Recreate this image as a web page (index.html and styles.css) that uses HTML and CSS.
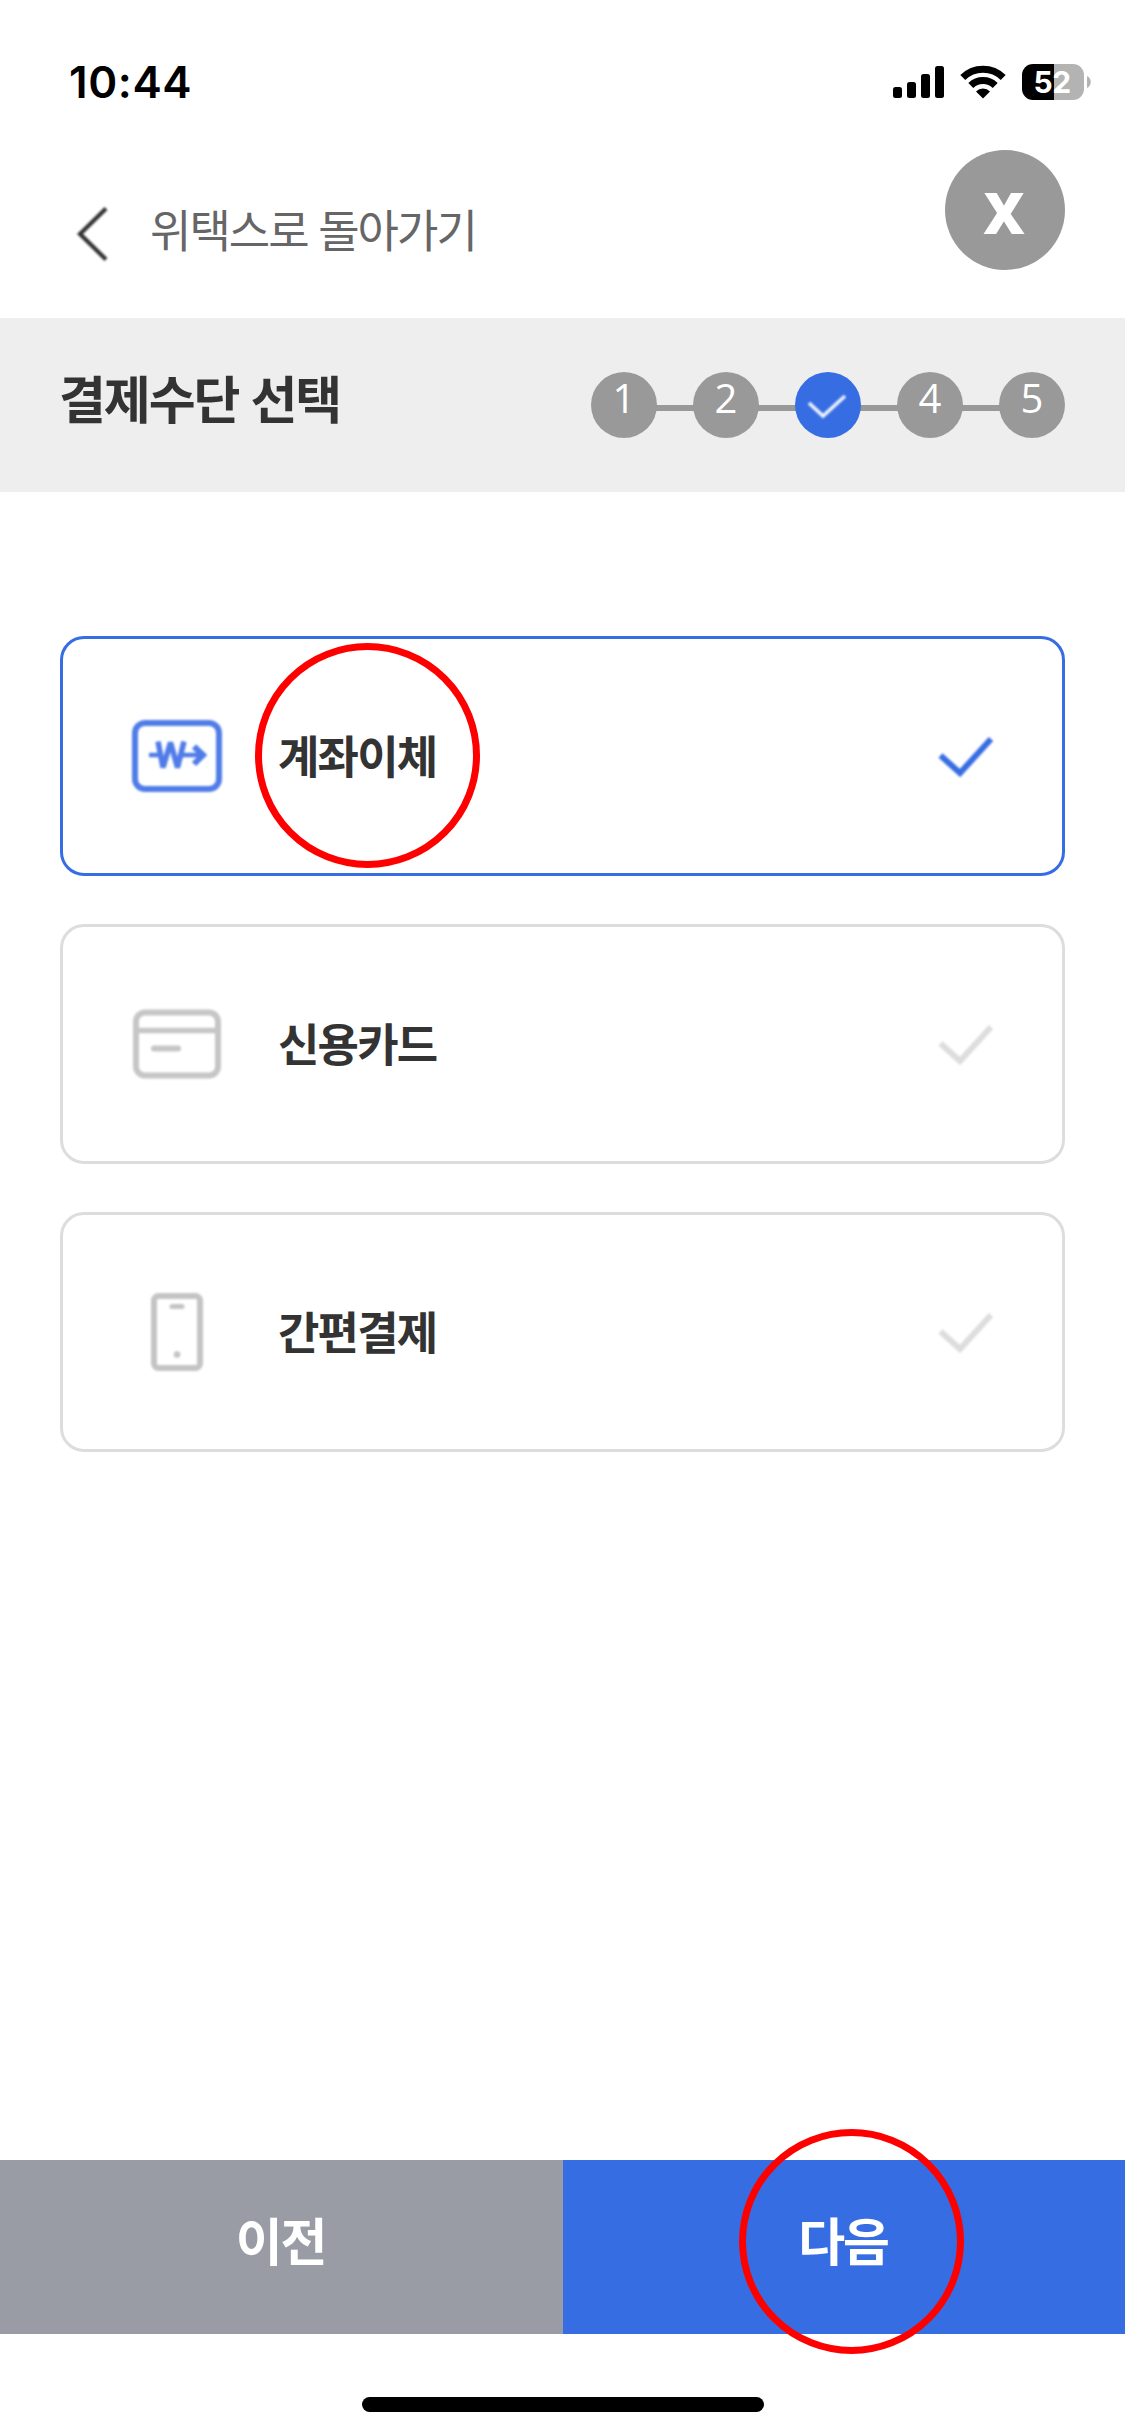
FILE: index.html
```html
<!DOCTYPE html>
<html lang="ko">
<head>
<meta charset="utf-8">
<title>결제수단 선택</title>
<link rel="stylesheet" href="styles.css">
</head>
<body>
<div class="screen">
  <div class="status">
    <span class="time">10:44</span>
    <svg class="signal" width="51" height="32" viewBox="0 0 51 32">
      <rect x="0" y="21" width="9" height="11" rx="2.5"/>
      <rect x="14" y="16" width="9" height="16" rx="2.5"/>
      <rect x="28" y="8" width="9" height="24" rx="2.5"/>
      <rect x="42" y="0" width="9" height="32" rx="2.5"/>
    </svg>
    <svg class="wifi" width="46" height="34" viewBox="0 0 46 34">
      <g fill="none" stroke="#000" stroke-width="7">
        <path d="M2.800 12.600a28.800 28.800 0 0 1 40.400 0"/>
        <path d="M10.800 20.600a17.400 17.400 0 0 1 24.400 0"/>
      </g>
      <path d="M16 26.400a9.700 9.700 0 0 1 14 0L23 33.500z"/>
    </svg>
    <div class="battery"><span class="level">52</span></div>
    <svg class="nub" width="4" height="12" viewBox="0 0 4 12"><path d="M0 0c5 2 5 10 0 12z" fill="#b3b3b3"/></svg>
  </div>

  <header class="topbar">
    <a class="back">
      <svg class="soft" width="34" height="60" viewBox="0 0 34 60"><path d="M31 4.500 5 30l26 25.500" fill="none" stroke="#333" stroke-width="4.200"/></svg>
      <span>위택스로 돌아가기</span>
    </a>
    <button class="close">X</button>
  </header>

  <section class="band">
    <h1 class="title">결제수단 선택</h1>
    <ol class="steps">
      <li class="step">1</li>
      <li class="step">2</li>
      <li class="step current"><svg class="soft" width="42" height="30" viewBox="0 0 42 30"><path d="M3 10 17 23 39 3" fill="none" stroke="#f0f4fe" stroke-width="3.600"/></svg></li>
      <li class="step">4</li>
      <li class="step">5</li>
    </ol>
  </section>

  <main class="options">
    <div class="option selected">
      <svg class="soft" width="96" height="96" viewBox="0 0 96 96" fill="none" stroke="#507ce8">
        <rect x="6" y="15" width="84" height="66" rx="10" stroke-width="6"/>
        <path d="M20 47H32M52 47H74" stroke-width="4.500"/>
        <path d="M29 33.500 34 59.500 41.500 34.500 48.500 59.500 55 33.500" stroke-width="5.500" stroke-linejoin="bevel"/>
        <path d="M65 38.500 74 47 65 56" stroke-width="6"/>
      </svg>
      <span class="label">계좌이체<i class="ring"></i></span>
      <svg class="check soft" width="60" height="48" viewBox="0 0 60 48"><path d="M4.500 23.500 24 41 55 7" fill="none" stroke="#376de3" stroke-width="6"/></svg>
    </div>
    <div class="option">
      <svg class="soft" width="96" height="96" viewBox="0 0 96 96" fill="none" stroke="#c6c6c6">
        <rect x="7" y="16.500" width="82" height="63" rx="9" stroke-width="6"/>
        <path d="M8 34.500H88" stroke-width="5.500"/>
        <path d="M25 52.500H49" stroke-width="6" stroke-linecap="round"/>
      </svg>
      <span class="label">신용카드</span>
      <svg class="check soft" width="60" height="48" viewBox="0 0 60 48"><path d="M4.500 23.500 24 41 55 7" fill="none" stroke="#ddd" stroke-width="6"/></svg>
    </div>
    <div class="option">
      <svg class="soft" width="96" height="96" viewBox="0 0 96 96" fill="none" stroke="#c4c4c4">
        <rect x="25" y="12" width="46" height="72" rx="4.500" stroke-width="6"/>
        <path d="M43 22.500H53" stroke-width="5" stroke-linecap="round"/>
        <path d="M48 70.500h.1" stroke-width="6.500" stroke-linecap="round"/>
      </svg>
      <span class="label">간편결제</span>
      <svg class="check soft" width="60" height="48" viewBox="0 0 60 48"><path d="M4.500 23.500 24 41 55 7" fill="none" stroke="#ddd" stroke-width="6"/></svg>
    </div>
  </main>

  <footer class="actions">
    <button class="action prev">이전</button>
    <button class="action next"><span class="target">다음<i class="ring"></i></span></button>
  </footer>
  <div class="home"></div>
</div>
</body>
</html>
```
FILE: styles.css
```css
* { box-sizing: border-box; }
body {
  margin: 0;
  background: #fff;
  color: #333;
  font-family: "Noto Sans CJK KR", sans-serif;
}
button { border: 0; padding: 0; font-family: inherit; color: #fff; }
svg { display: block; flex: none; }
.soft { filter: blur(0.8px); }
.screen {
  width: 1125px;
  height: 2436px;
  display: flex;
  flex-direction: column;
  overflow: hidden;
}

.status {
  height: 150px;
  padding: 64px 34px 0 69px;
  display: flex;
  align-items: flex-start;
  font-family: Inter, sans-serif;
  color: #000;
}
.time {
  font-size: 44px;
  font-weight: 600;
  line-height: 36px;
  letter-spacing: 0.6px;
  margin-right: auto;
}
.signal { margin: 2px 16px 0 0; }
.wifi { margin: 1px 16px 0 0; }
.battery {
  width: 62px;
  height: 36px;
  border-radius: 11px;
  background: linear-gradient(90deg, #000 32px, #b3b3b3 32px);
  text-align: center;
}
.level {
  display: block;
  color: #fff;
  font-size: 30px;
  font-weight: 700;
  line-height: 36px;
  letter-spacing: -0.5px;
  margin-left: -2px;
}
.nub { margin: 12px 0 0 3px; }

.topbar {
  height: 168px;
  padding: 0 60px 0 75px;
  display: flex;
  justify-content: space-between;
  align-items: flex-start;
}
.back {
  display: flex;
  align-items: center;
  gap: 41px;
  padding-top: 54px;
  font-size: 45px;
  line-height: 60px;
  letter-spacing: -2px;
  color: #666;
}
.back span { margin-top: -10px; }
.close {
  width: 120px;
  height: 120px;
  border-radius: 50%;
  background: #999;
  font-family: "Open Sans", "Noto Sans", sans-serif;
  font-size: 57px;
  font-weight: 800;
  line-height: 120px;
  padding: 2px 2px 0 0;
}

.band {
  height: 174px;
  padding: 0 60px;
  background: #eee;
  display: flex;
  justify-content: space-between;
  align-items: flex-start;
}
.title {
  margin: 41px 0 0 -1px;
  font-size: 51px;
  font-weight: 700;
  line-height: 76px;
  letter-spacing: -2.1px;
}
.steps {
  list-style: none;
  margin: 54px 0 0;
  padding: 0;
  display: flex;
  gap: 36px;
  background: linear-gradient(#999, #999) 33px 33px / 408px 6px no-repeat;
}
.step {
  width: 66px;
  height: 66px;
  border-radius: 50%;
  background: #999;
  color: #fff;
  font-family: "Open Sans", "Noto Sans", sans-serif;
  font-size: 40px;
  font-weight: 400;
  line-height: 52px;
  text-align: center;
}
.current { background: #376de3; padding: 21px 0 0 11px; }

.options {
  flex: 1;
  padding: 144px 60px 0;
  display: flex;
  flex-direction: column;
  gap: 48px;
}
.option {
  height: 240px;
  padding: 0 66px;
  border: 3px solid #ddd;
  border-radius: 24px;
  display: flex;
  align-items: center;
}
.selected { border-color: #376de3; }
.label {
  position: relative;
  margin: -3px 0 0 53px;
  font-size: 45px;
  font-weight: 700;
  line-height: 66px;
  letter-spacing: -1.8px;
}
.check { margin-left: auto; }
.ring {
  position: absolute;
  left: -23px;
  top: -79px;
  width: 225px;
  height: 225px;
  border: 7px solid #f00;
  border-radius: 50%;
}

.actions { height: 174px; display: flex; }
.action {
  flex: none;
  width: 563px;
  font-size: 51px;
  font-weight: 700;
  line-height: 76px;
  letter-spacing: -2.25px;
  padding: 0 2px 16px 0;
}
.prev { background: #999ca5; }
.next { width: 562px; background: #376de3; }
.target { position: relative; }
.target .ring { left: -59px; top: -73px; }
.home {
  width: 402px;
  height: 15px;
  margin: 63px 0 24px 362px;
  border-radius: 8px;
  background: #000;
}
```
